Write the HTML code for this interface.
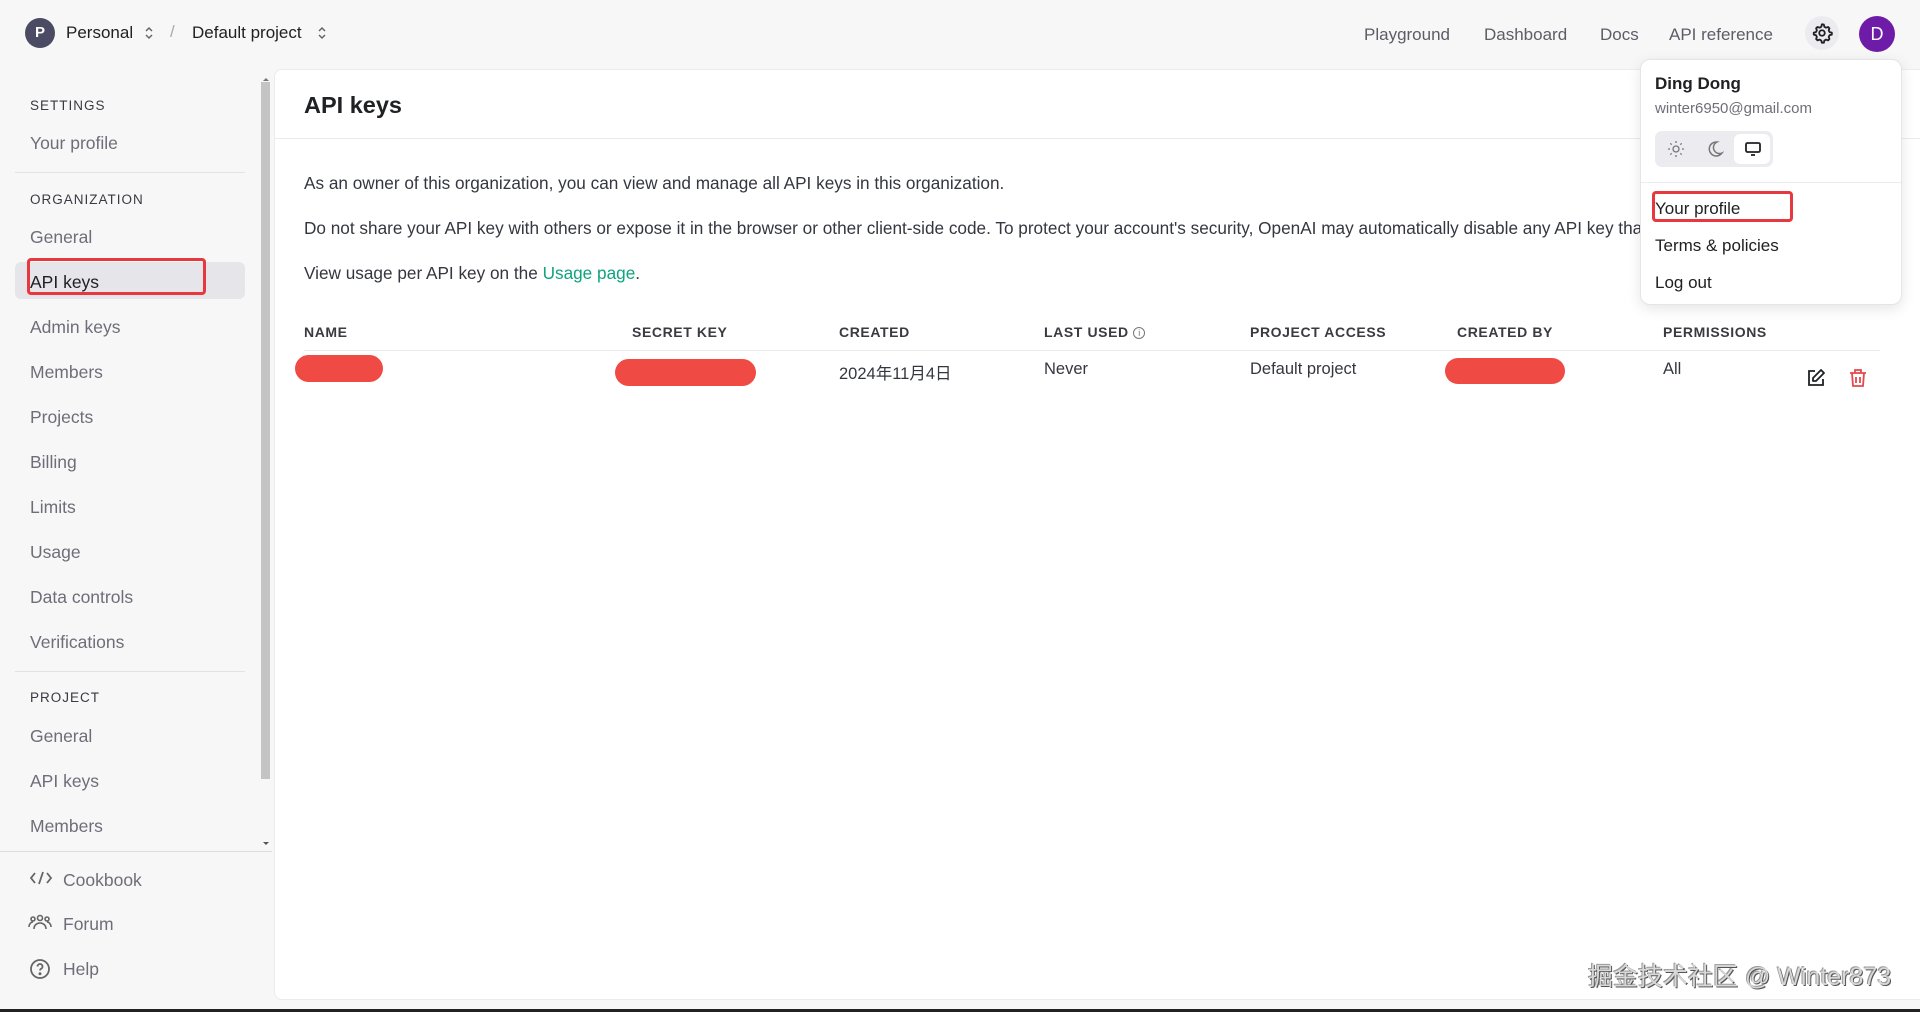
<!DOCTYPE html>
<html><head><meta charset="utf-8">
<style>
*{margin:0;padding:0;box-sizing:border-box}
body{width:1920px;height:1012px;background:#f7f7f8;font-family:"Liberation Sans","Noto Sans CJK SC",sans-serif;color:#202123;position:relative;overflow:hidden}
.a{position:absolute;white-space:nowrap}
.nav{font-size:17px;color:#5d5d66}
.sb{font-size:17.5px;color:#6e6e78;left:30px}
.sh{font-size:13.5px;letter-spacing:1px;color:#3a3a40;left:30px;font-weight:500}
.th{font-size:14px;font-weight:700;letter-spacing:.6px;color:#3a3a40;top:324px}
.td{font-size:16.5px;color:#353740;top:360px}
.pill{position:absolute;background:#f04a44;border-radius:14px}
.p{font-size:17.2px;color:#353740;left:304px}
</style></head><body>
<!-- top bar -->
<div class="a" style="left:25px;top:18px;width:30px;height:30px;border-radius:50%;background:#4b4b63;color:#fff;font-size:15px;font-weight:700;text-align:center;line-height:30px">P</div>
<div class="a" style="left:66px;top:23px;font-size:17px;color:#202123">Personal</div>
<svg class="a" style="left:143px;top:25px" width="12" height="16" viewBox="0 0 12 16"><path d="M3 6l3-3 3 3M3 10l3 3 3-3" stroke="#666" stroke-width="1.5" fill="none"/></svg>
<div class="a" style="left:170px;top:22px;font-size:17px;color:#aaa">/</div>
<div class="a" style="left:192px;top:23px;font-size:17px;color:#202123">Default project</div>
<svg class="a" style="left:316px;top:25px" width="12" height="16" viewBox="0 0 12 16"><path d="M3 6l3-3 3 3M3 10l3 3 3-3" stroke="#666" stroke-width="1.5" fill="none"/></svg>
<div class="a nav" style="left:1364px;top:25px">Playground</div>
<div class="a nav" style="left:1484px;top:25px">Dashboard</div>
<div class="a nav" style="left:1600px;top:25px">Docs</div>
<div class="a nav" style="left:1669px;top:25px">API reference</div>
<div class="a" style="left:1805px;top:16px;width:34px;height:34px;border-radius:50%;background:#ececf0"></div>
<svg class="a" style="left:1811px;top:22px" width="22" height="22" viewBox="0 0 24 24" fill="none" stroke="#202123" stroke-width="2"><circle cx="12" cy="12" r="3"/><path d="M12 2.5l2 .3.6 2.4 1.8 1 2.3-.8 1.4 1.5-.8 2.3 1 1.8 2.4.6v2.2l-2.4.6-1 1.8.8 2.3-1.4 1.5-2.3-.8-1.8 1-.6 2.4h-2.2l-.6-2.4-1.8-1-2.3.8-1.500-1.5.8-2.3-1-1.8-2.4-.6v-2.2l2.4-.6 1-1.8-.8-2.3 1.5-1.5 2.3.8 1.8-1 .6-2.4z" stroke-linejoin="round"/></svg>
<div class="a" style="left:1859px;top:16px;width:36px;height:36px;border-radius:50%;background:#6e1ca8;color:#fff;font-size:18px;text-align:center;line-height:36px">D</div>

<!-- sidebar -->
<div class="a sh" style="top:98px">SETTINGS</div>
<div class="a sb" style="top:133px">Your profile</div>
<div class="a" style="left:15px;top:172px;width:230px;height:1px;background:#e3e3e6"></div>
<div class="a sh" style="top:192px">ORGANIZATION</div>
<div class="a sb" style="top:227px">General</div>
<div class="a" style="left:15px;top:262px;width:230px;height:37px;border-radius:6px;background:#e6e6ea"></div>
<div class="a" style="left:27px;top:258px;width:179px;height:37px;border:3px solid #e8383f;border-radius:4px"></div>
<div class="a sb" style="top:272px;color:#202123">API keys</div>
<div class="a sb" style="top:317px">Admin keys</div>
<div class="a sb" style="top:362px">Members</div>
<div class="a sb" style="top:407px">Projects</div>
<div class="a sb" style="top:452px">Billing</div>
<div class="a sb" style="top:497px">Limits</div>
<div class="a sb" style="top:542px">Usage</div>
<div class="a sb" style="top:587px">Data controls</div>
<div class="a sb" style="top:632px">Verifications</div>
<div class="a" style="left:15px;top:671px;width:230px;height:1px;background:#e3e3e6"></div>
<div class="a sh" style="top:690px">PROJECT</div>
<div class="a sb" style="top:726px">General</div>
<div class="a sb" style="top:771px">API keys</div>
<div class="a sb" style="top:816px">Members</div>
<div class="a" style="left:261px;top:82px;width:9px;height:697px;background:#c4c4c4"></div>
<div class="a" style="left:263px;top:75px;border:3px solid transparent;border-bottom:3px solid #777"></div>
<div class="a" style="left:263px;top:842px;border:3px solid transparent;border-top:3px solid #555"></div>
<div class="a" style="left:0;top:851px;width:272px;height:1px;background:#ddd"></div>
<svg class="a" style="left:29px;top:870px" width="24" height="16" viewBox="0 0 24 16" fill="none" stroke="#666" stroke-width="1.8"><path d="M6 3l-4 5 4 5M18 3l4 5-4 5M14 2l-4 12"/></svg>
<div class="a sb" style="left:63px;top:870px">Cookbook</div>
<svg class="a" style="left:28px;top:914px" width="24" height="16" viewBox="0 0 24 16" fill="none" stroke="#666" stroke-width="1.6"><circle cx="12" cy="4" r="2.5"/><circle cx="5" cy="5" r="2"/><circle cx="19" cy="5" r="2"/><path d="M6 15c0-4 3-6 6-6s6 2 6 6M1 13c0-3 2-5 4-5M23 13c0-3-2-5-4-5"/></svg>
<div class="a sb" style="left:63px;top:914px">Forum</div>
<svg class="a" style="left:29px;top:958px" width="22" height="22" viewBox="0 0 22 22" fill="none" stroke="#666" stroke-width="1.8"><circle cx="11" cy="11" r="9"/><path d="M8.5 8.5a2.5 2.5 0 1 1 3.5 2.3c-.7.4-1 .9-1 1.700"/><circle cx="11" cy="15.8" r=".6" fill="#666"/></svg>
<div class="a sb" style="left:63px;top:959px">Help</div>

<!-- main panel -->
<div class="a" style="left:274px;top:69px;width:1660px;height:931px;background:#fff;border:1px solid #ececef;border-radius:8px"></div>
<div class="a" style="left:304px;top:92px;font-size:23.5px;font-weight:700;color:#202123">API keys</div>
<div class="a" style="left:275px;top:138px;width:1645px;height:1px;background:#ececf0"></div>
<div class="a p" style="top:173px">As an owner of this organization, you can view and manage all API keys in this organization.</div>
<div class="a p" style="top:218px">Do not share your API key with others or expose it in the browser or other client-side code. To protect your account's security, OpenAI may automatically disable any API key that has leaked publicly.</div>
<div class="a p" style="top:263px">View usage per API key on the <span style="color:#10a37f">Usage page</span>.</div>
<div class="a th" style="left:304px">NAME</div>
<div class="a th" style="left:632px">SECRET KEY</div>
<div class="a th" style="left:839px">CREATED</div>
<div class="a th" style="left:1044px">LAST USED <span style="display:inline-block;width:12px;height:12px;border:1.3px solid #777;border-radius:50%;font-size:9px;line-height:10px;text-align:center;color:#777;font-weight:400;letter-spacing:0;vertical-align:1px">i</span></div>
<div class="a th" style="left:1250px">PROJECT ACCESS</div>
<div class="a th" style="left:1457px">CREATED BY</div>
<div class="a th" style="left:1663px">PERMISSIONS</div>
<div class="a" style="left:304px;top:350px;width:1576px;height:1px;background:#ececf0"></div>
<div class="pill" style="left:295px;top:355px;width:88px;height:27px"></div>
<div class="pill" style="left:615px;top:359px;width:141px;height:27px"></div>
<div class="a td" style="left:839px">2024年11月4日</div>
<div class="a td" style="left:1044px">Never</div>
<div class="a td" style="left:1250px">Default project</div>
<div class="pill" style="left:1445px;top:358px;width:120px;height:26px"></div>
<div class="a td" style="left:1663px">All</div>
<svg class="a" style="left:1806px;top:368px" width="20" height="20" viewBox="0 0 20 20" fill="none" stroke="#202123" stroke-width="1.8"><path d="M9 3H3v14h14v-6"/><path d="M15 2l3 3-8 8H7v-3z" stroke-linejoin="round"/></svg>
<svg class="a" style="left:1848px;top:368px" width="20" height="20" viewBox="0 0 20 20" fill="none" stroke="#e5484d" stroke-width="1.8"><path d="M2 5h16M7 5V2h6v3M4 5l1 13h10l1-13M8 9v6M12 9v6"/></svg>

<!-- dropdown -->
<div class="a" style="left:1640px;top:59px;width:262px;height:246px;background:#fff;border:1px solid #e5e5e8;border-radius:10px;box-shadow:0 4px 14px rgba(0,0,0,.1)"></div>
<div class="a" style="left:1655px;top:74px;font-size:17px;font-weight:700;color:#202123">Ding Dong</div>
<div class="a" style="left:1655px;top:100px;font-size:15px;color:#6e6e78">winter6950@gmail.com</div>
<div class="a" style="left:1655px;top:131px;width:118px;height:36px;background:#ececf0;border-radius:7px"></div>
<div class="a" style="left:1734px;top:134px;width:36px;height:30px;background:#fff;border-radius:6px"></div>
<svg class="a" style="left:1667px;top:140px" width="18" height="18" viewBox="0 0 18 18" fill="none" stroke="#777" stroke-width="1.3"><circle cx="9" cy="9" r="3"/><path d="M9 1v2M9 15v2M1 9h2M15 9h2M3.3 3.3l1.4 1.4M13.3 13.3l1.4 1.4M3.3 14.7l1.4-1.4M13.3 4.7l1.4-1.4"/></svg>
<svg class="a" style="left:1706px;top:140px" width="18" height="18" viewBox="0 0 18 18" fill="none" stroke="#777" stroke-width="1.5"><path d="M11 2a7 7 0 1 0 5 11A6 6 0 0 1 11 2z"/></svg>
<svg class="a" style="left:1744px;top:140px" width="18" height="18" viewBox="0 0 18 18" fill="none" stroke="#202123" stroke-width="1.8"><rect x="2" y="3" width="14" height="9" rx="1.5"/><path d="M7 15h4"/></svg>
<div class="a" style="left:1641px;top:182px;width:260px;height:1px;background:#ececf0"></div>
<div class="a" style="left:1652px;top:191px;width:141px;height:31px;border:3px solid #e8383f;border-radius:4px"></div>
<div class="a" style="left:1655px;top:199px;font-size:17px;color:#202123">Your profile</div>
<div class="a" style="left:1655px;top:236px;font-size:17px;color:#202123">Terms &amp; policies</div>
<div class="a" style="left:1655px;top:273px;font-size:17px;color:#202123">Log out</div>

<div class="a" style="left:1588px;top:957px;font-size:25px;color:#d8d8d8;text-shadow:1px 1px 0 #555,-1px -1px 0 #999">掘金技术社区 @ Winter873</div>
<div class="a" style="left:0;top:1009px;width:1920px;height:3px;background:#222"></div>
</body></html>
